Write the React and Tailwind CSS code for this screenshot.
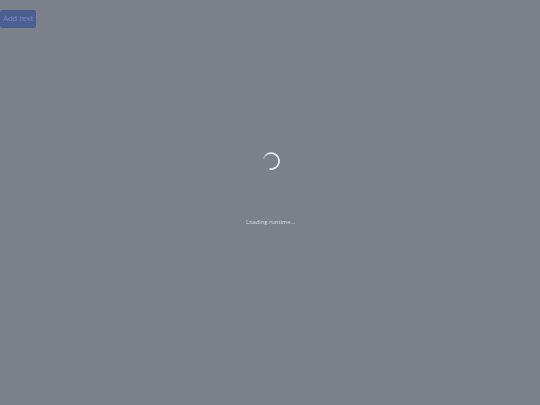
export default function App() {
  return (
    <div className="relative w-full min-h-[405px] bg-[#7b808b] font-['Open_Sans',sans-serif]">
      <div className="flex pt-[10px]">
        <button className="flex items-center justify-center w-[36px] h-[18px] rounded-[2px] bg-[#4b5f96] text-[#7e8cb4] text-[7.6px] leading-none">
          Add text
        </button>
      </div>

      <div className="absolute inset-0 flex flex-col items-center">
        <svg className="mt-[151px] ml-[1px] w-[20px] h-[20px]" viewBox="0 0 20 20" fill="none">
          <defs>
            <linearGradient id="fade" x1="0" y1="0" x2="1" y2="0">
              <stop offset="0" stopColor="#e6e8eb" stopOpacity="0.3" />
              <stop offset="0.4" stopColor="#e6e8eb" stopOpacity="1" />
            </linearGradient>
          </defs>
          <path
            d="M2.6 7.2 A8 8 0 1 1 9.2 18"
            stroke="url(#fade)"
            strokeWidth="1.8"
            strokeLinecap="round"
          />
        </svg>
        <p className="mt-[47px] ml-[1px] text-[5.9px] leading-[9px] tracking-[-0.05px] text-[#dadce0]">Loading runtime...</p>
      </div>
    </div>
  )
}
